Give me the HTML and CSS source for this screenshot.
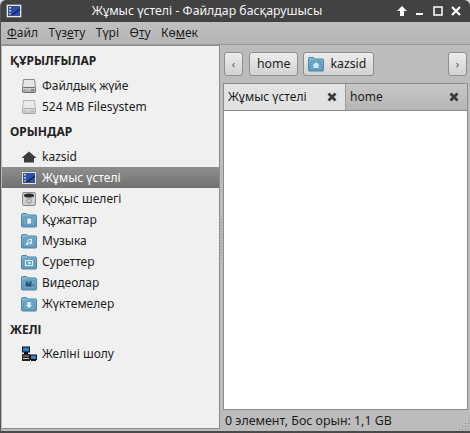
FILE: index.html
```html
<!DOCTYPE html>
<html lang="kk">
<head>
<meta charset="utf-8">
<title>Жұмыс үстелі - Файлдар басқарушысы</title>
<link rel="stylesheet" href="styles.css">
</head>
<body>
<svg class="defs" width="0" height="0" aria-hidden="true">
  <defs>
    <linearGradient id="fold" x1="0" y1="0" x2="0" y2="1"><stop offset="0" stop-color="#8bbbd4"/><stop offset="1" stop-color="#5c98ba"/></linearGradient>
    <linearGradient id="disk" x1="0" y1="0" x2="0" y2="1"><stop offset="0" stop-color="#dcdcdc"/><stop offset="1" stop-color="#9c9c9c"/></linearGradient>
    <symbol id="folder" viewBox="0 0 16 16">
      <path d="M.5 2.500a1 1 0 0 1 1-1h4l1.500 1.500h7.500a1 1 0 0 1 1 1v10a1 1 0 0 1-1 1h-13a1 1 0 0 1-1-1z" fill="url(#fold)" stroke="#4a86a8"/>
      <rect x="2.500" y="5" width="11" height="8.500" rx="1" fill="#6da5c5" stroke="#5590b2" stroke-width=".6"/>
    </symbol>
    <symbol id="desk" viewBox="0 0 16 16">
      <rect x=".5" y="1.500" width="15" height="13" rx="1" fill="#e8e8e8" stroke="#777"/>
      <rect x="2" y="3" width="12" height="10" fill="#2a4fb0"/>
      <rect x="3" y="4" width="2" height="1.500" fill="#ffd65a"/>
      <rect x="3" y="7" width="2" height="1.500" fill="#9fd0ff"/>
      <rect x="3" y="10" width="2" height="1.500" fill="#f0a040"/>
      <path d="M6 12 14 6" stroke="#20242c" stroke-width="1.400"/>
    </symbol>
    <symbol id="drive" viewBox="0 0 16 16">
      <path d="M2.500 1.500h11l1 8h-13z" fill="#e6e6e6" stroke="#8a8a8a"/>
      <rect x="1.500" y="9.500" width="13" height="5" rx="1" fill="url(#disk)" stroke="#6f6f6f"/>
      <rect x="3" y="11.500" width="2" height="1" fill="#7fb04a"/>
      <rect x="10" y="11.500" width="3" height="1" fill="#555"/>
    </symbol>
    <symbol id="x" viewBox="0 0 10 10">
      <path d="M1.500 1.500 8.500 8.500M8.500 1.500 1.500 8.500" stroke="#3a3a3a" stroke-width="2.800"/>
    </symbol>
  </defs>
</svg>
<div class="window">
  <header class="titlebar">
    <svg class="app-icon" width="16" height="16"><use href="#desk"/></svg>
    <span class="title">Жұмыс үстелі - Файлдар басқарушысы</span>
    <div class="winbtns">
      <svg width="12" height="12" viewBox="0 0 12 12"><path d="M6 1 11 6H8v5H4V6H1z" fill="#fff"/></svg>
      <svg width="12" height="12" viewBox="0 0 12 12"><rect x="2" y="8" width="7" height="2" fill="#fff"/></svg>
      <svg width="12" height="12" viewBox="0 0 12 12"><rect x="2" y="2" width="8" height="8" fill="none" stroke="#fff" stroke-width="1.500"/></svg>
      <svg width="12" height="12" viewBox="0 0 12 12"><path d="M2 2 10 10M10 2 2 10" stroke="#fff" stroke-width="2.200"/></svg>
    </div>
  </header>
  <nav class="menubar">
    <span><u>Ф</u>айл</span><span>Түз<u>е</u>ту</span><span>Түрі</span><span>Ө<u>т</u>у</span><span>Кө<u>м</u>ек</span>
  </nav>
  <div class="body">
    <aside class="sidebar">
      <h3 class="head first">ҚҰРЫЛҒЫЛАР</h3>
      <div class="item"><svg width="16" height="16"><use href="#drive"/></svg>Файлдық жүйе</div>
      <div class="item"><svg class="dim" width="16" height="16"><use href="#drive"/></svg>524 MB Filesystem</div>
      <h3 class="head">ОРЫНДАР</h3>
      <div class="item"><svg width="16" height="16" viewBox="0 0 16 16"><path d="M8 2.500 15.500 9H13v4.500H3V9H.5z" fill="#3c3c3c"/></svg>kazsid</div>
      <div class="item selected"><svg width="16" height="16"><use href="#desk"/></svg>Жұмыс үстелі</div>
      <div class="item"><svg width="16" height="16" viewBox="0 0 16 16"><rect x="1.500" y="1.500" width="13" height="13" rx="1.500" fill="#cfcfcf" stroke="#8a8a8a"/><ellipse cx="8" cy="4.500" rx="5" ry="2" fill="#2c2c2c"/><circle cx="8" cy="10" r="2.300" fill="none" stroke="#8f8f8f"/></svg>Қоқыс шелегі</div>
      <div class="item"><svg width="16" height="16" viewBox="0 0 16 16"><use href="#folder"/><path d="M6 6h3l1.500 1.500V12H6z" fill="#e4f0f7" stroke="#3f7ea3" stroke-width=".5"/></svg>Құжаттар</div>
      <div class="item"><svg width="16" height="16" viewBox="0 0 16 16"><use href="#folder"/><path d="M7 11V7l3.500-1v4" fill="none" stroke="#e4f0f7"/><circle cx="6" cy="11" r="1.200" fill="#e4f0f7"/><circle cx="9.500" cy="10" r="1.200" fill="#e4f0f7"/></svg>Музыка</div>
      <div class="item"><svg width="16" height="16" viewBox="0 0 16 16"><use href="#folder"/><rect x="4.500" y="6.500" width="7" height="5" fill="none" stroke="#e4f0f7"/><circle cx="8.500" cy="9" r="1.200" fill="#e4f0f7"/></svg>Суреттер</div>
      <div class="item"><svg width="16" height="16" viewBox="0 0 16 16"><use href="#folder"/><circle cx="6" cy="7.500" r="1.300" fill="#24506c"/><circle cx="9.500" cy="7.500" r="1.300" fill="#24506c"/><rect x="4.500" y="8.500" width="6" height="3" fill="#24506c"/><path d="M11 10l1.500-1v2.500z" fill="#24506c"/></svg>Видеолар</div>
      <div class="item"><svg width="16" height="16" viewBox="0 0 16 16"><use href="#folder"/><path d="M6.500 6h3v3H11l-3 3-3-3h1.500z" fill="#e4f0f7"/></svg>Жүктемелер</div>
      <h3 class="head net">ЖЕЛІ</h3>
      <div class="item"><svg width="16" height="16" viewBox="0 0 16 16"><rect x="1.500" y="1" width="7" height="5" fill="#2d7fd0" stroke="#111"/><rect x="3" y="6" width="4" height="2" fill="#111"/><rect x="1" y="8" width="8" height="7" fill="#222"/><rect x="2" y="9.500" width="6" height="1" fill="#b080e0"/><rect x="2" y="12" width="6" height="1" fill="#e0d060"/><rect x="9.500" y="9" width="6" height="4.500" fill="#2d7fd0" stroke="#111"/><rect x="10" y="13.500" width="5" height="1.500" fill="#111"/></svg>Желіні шолу</div>
    </aside>
    <div class="grip"><i class="dots"></i></div>
    <main class="main">
      <div class="pathbar">
        <button class="btn small">‹</button>
        <button class="btn crumb">home</button>
        <button class="btn crumb withicon"><svg width="16" height="16" viewBox="0 0 16 16"><use href="#folder"/><path d="M8 6l3.500 3.200H10.500V12h-5V9.200H4.500z" fill="#cfe6f3"/></svg>kazsid</button>
        <span class="spacer"></span>
        <button class="btn small end">›</button>
      </div>
      <div class="tabs">
        <div class="tab active"><span>Жұмыс үстелі</span><svg width="10" height="10"><use href="#x"/></svg></div>
        <div class="tab"><span>home</span><svg width="10" height="10"><use href="#x"/></svg></div>
      </div>
      <div class="view"></div>
      <footer class="status">0 элемент, Бос орын: 1,1 GB<i class="resize"></i></footer>
    </main>
  </div>
</div>
</body>
</html>
```
FILE: styles.css
```css
* { box-sizing: border-box; }
html, body { margin: 0; padding: 0; background: #dcdcdc; }
.defs { position: absolute; }
.window {
  width: 470px; height: 433px; display: flex; flex-direction: column;
  background: #bcbcbc; font: 12px/16px "Noto Sans", "Open Sans", sans-serif; color: #1c1c1c;
  border-radius: 6px 6px 0 0; overflow: hidden;
  border-bottom: 2px solid #4a4a4a; border-left: 1px solid #555;
}
.titlebar {
  height: 22px; flex: none; display: flex; align-items: center; background: #424242; color: #f4f4f4;
  padding: 0 8px 0 5px; font-size: 12.3px;
}
.title { flex: 1; text-align: center; padding-right: 4px; }
.winbtns { display: flex; gap: 6px; }
.menubar {
  height: 23px; flex: none; display: flex; align-items: center; gap: 10.5px; padding: 0 6px;
  background: linear-gradient(#c0c0c0, #b4b4b4); border-bottom: 1px solid #999;
}
.menubar u { text-underline-offset: 1px; }
.body { flex: 1; display: flex; min-height: 0; padding: 1px 2px 0 1px; }
.sidebar {
  width: 218px; flex: none; background: #f0f0f0; border: 1px solid #8c8c8c; border-left: 0; padding-top: 6px; margin: -1px 0 2px;
}
.head { margin: 7px 0 6px; font-size: 12px; line-height: 16px; font-weight: 700; padding-left: 8px; color: #222; }
.head.first { margin-top: 1px; }
.head.net { margin: 8px 0 5px; }
.item { height: 21px; display: flex; align-items: center; gap: 5px; padding-left: 19px; }
.item svg { flex: none; }
.dim { opacity: .55; }
.selected { background: linear-gradient(#8f8f8f, #6f6f6f); color: #fff; }
.grip { width: 3px; flex: none; display: flex; align-items: center; justify-content: center; }
.dots { width: 1px; height: 40px; background: repeating-linear-gradient(#8a8a8a 0 1px, transparent 1px 3px); }
.main { flex: 1; min-width: 0; display: flex; flex-direction: column; }
.pathbar { height: 37px; flex: none; display: flex; align-items: center; gap: 5px; padding: 0 0 1px 1px; }
.spacer { flex: 1; }
.btn {
  height: 24px; border: 1px solid #8e8e8e; border-radius: 3px; background: linear-gradient(#ededed, #d2d2d2);
  font: inherit; color: inherit; padding: 0; display: flex; align-items: center; justify-content: center;
}
.small { width: 19px; font-size: 11px; color: #555; margin-right: 1px; }
.crumb { padding: 0 7px; font-size: 12.3px; }
.withicon { padding-left: 4px; gap: 6px; }
.tabs { height: 28px; flex: none; display: flex; border: 1px solid #8c8c8c; }
.tab {
  flex: 1; display: flex; align-items: center; justify-content: space-between; padding: 0 8px 0 4px;
  background: linear-gradient(#c6c6c6, #b6b6b6);
}
.tab.active { background: #e2e2e2; border-right: 1px solid #9a9a9a; flex: 0 0 122px; padding-left: 4px; }
.view { flex: 1; background: #fff; border: 1px solid #8c8c8c; border-top: 0; min-height: 0; }
.status { height: 21px; flex: none; display: flex; align-items: center; padding-left: 2px; font-size: 12.4px; position: relative; }
.resize {
  position: absolute; right: -1px; bottom: 1px; width: 11px; height: 11px;
  background: radial-gradient(circle, #8a8a8a 0 .7px, transparent .8px) 0 0 / 3px 3px;
  clip-path: polygon(100% 0, 100% 100%, 0 100%);
}
```
